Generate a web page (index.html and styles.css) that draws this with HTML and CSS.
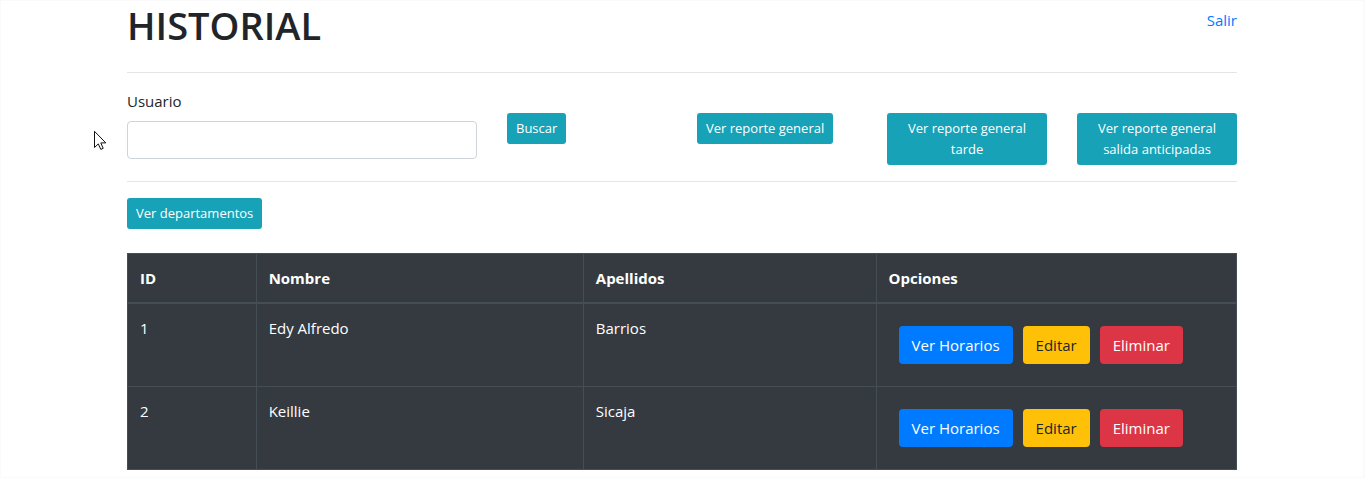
FILE: index.html
```html
<!DOCTYPE html>
<html lang="es">
<head>
<meta charset="utf-8">
<title>Historial</title>
<meta name="viewport" content="width=device-width, initial-scale=1">
<link rel="stylesheet" href="styles.css">
</head>
<body>
<main class="container">
  <header class="page-header">
    <h1 class="page-title">HISTORIAL</h1>
    <a class="logout" href="#">Salir</a>
  </header>
  <hr class="divider">
  <form class="filters">
    <div class="field">
      <label class="field-label" for="usuario">Usuario</label>
      <input class="field-input" type="text" id="usuario" name="usuario">
    </div>
    <div class="action"><button class="btn btn-small btn-info" type="submit">Buscar</button></div>
    <div class="action"><button class="btn btn-small btn-info" type="button">Ver reporte general</button></div>
    <div class="action"><button class="btn btn-small btn-info" type="button">Ver reporte general tarde</button></div>
    <div class="action"><button class="btn btn-small btn-info" type="button">Ver reporte general salida anticipadas</button></div>
  </form>
  <hr class="divider">
  <button class="btn btn-small btn-info" type="button">Ver departamentos</button>
  <table class="records">
    <colgroup>
      <col class="col-id"><col class="col-name"><col class="col-surname"><col class="col-options">
    </colgroup>
    <thead>
      <tr><th scope="col">ID</th><th scope="col">Nombre</th><th scope="col">Apellidos</th><th scope="col">Opciones</th></tr>
    </thead>
    <tbody>
      <tr>
        <td>1</td><td>Edy Alfredo</td><td>Barrios</td>
        <td><div class="options">
          <button class="btn btn-primary" type="button">Ver Horarios</button>
          <button class="btn btn-warning" type="button">Editar</button>
          <button class="btn btn-danger" type="button">Eliminar</button>
        </div></td>
      </tr>
      <tr>
        <td>2</td><td>Keillie</td><td>Sicaja</td>
        <td><div class="options">
          <button class="btn btn-primary" type="button">Ver Horarios</button>
          <button class="btn btn-warning" type="button">Editar</button>
          <button class="btn btn-danger" type="button">Eliminar</button>
        </div></td>
      </tr>
    </tbody>
  </table>
</main>
<svg class="pointer" width="13" height="21" viewBox="0 0 13 21" aria-hidden="true">
  <path d="M.5 1.300V17.500L4.300 13.900L6.800 19.400L9.200 18.300L6.800 12.900H11.800Z" fill="#fff" stroke="#111" stroke-width="1"/>
</svg>
</body>
</html>
```
FILE: styles.css
```css
*, *::before, *::after { box-sizing: border-box; }

body {
  margin: 0;
  min-height: 100vh;
  border: solid #fafafa;
  border-width: 0 2px 1px 1px;
  background: #fff;
  box-shadow: inset 0 1px 0 #fafafa;
  color: #212529;
  font-family: "Segoe UI", "Open Sans", "Noto Sans", sans-serif;
  font-size: 15px;
  line-height: 24px;
}

.container {
  max-width: 1140px;
  margin: 0 auto;
  padding: 0 15px 7px;
}

.page-header {
  display: flex;
  justify-content: space-between;
  align-items: flex-start;
  padding-bottom: 6px;
}

.page-title {
  margin: 0;
  font-size: 38px;
  font-weight: 600;
  line-height: 50px;
}

.logout {
  padding-top: 8px;
  color: #007bff;
  text-decoration: none;
}

.logout:hover { text-decoration: underline; }

.divider {
  margin: 16px 0;
  border: 0;
  border-top: 1px solid #e5e5e5;
}

.filters {
  display: grid;
  grid-template-columns: repeat(12, minmax(0, 1fr));
  column-gap: 30px;
}

.field { grid-column: span 4; }

.field-label {
  display: block;
  margin-bottom: 8px;
}

.field-input {
  display: block;
  width: 100%;
  height: 38px;
  padding: 6px 12px;
  border: 1px solid #ced4da;
  border-radius: 4px;
  background: #fff;
  color: #495057;
  font: inherit;
}

.action {
  grid-column: span 2;
  padding-top: 24px;
}

.btn {
  display: inline-block;
  padding: 6px 12px;
  border: 1px solid transparent;
  border-radius: 4px;
  color: #fff;
  font: inherit;
  text-align: center;
  vertical-align: middle;
  cursor: pointer;
}

.btn-small {
  padding: 4px 8px;
  border-radius: 3px;
  font-size: 13px;
  line-height: 21px;
}

.btn-info { background: #17a2b8; }
.btn-primary { background: #007bff; }
.btn-warning { background: #ffc107; color: #212529; }
.btn-danger { background: #dc3545; }

.records {
  width: 100%;
  margin-top: 24px;
  border-collapse: collapse;
  table-layout: fixed;
  background: #343a40;
  color: #fff;
}

.col-id { width: 11.6%; }
.col-name { width: 29.5%; }
.col-surname { width: 26.4%; }
.col-options { width: 32.5%; }

.records th,
.records td {
  padding: 12px;
  border: 1px solid #454d55;
  text-align: left;
  vertical-align: top;
}

.records thead th {
  border-bottom-width: 2px;
  font-weight: 700;
}

.options {
  display: flex;
  flex-wrap: wrap;
  gap: 10px;
  padding: 10px;
}

.pointer {
  position: absolute;
  top: 130px;
  left: 94px;
}
```
